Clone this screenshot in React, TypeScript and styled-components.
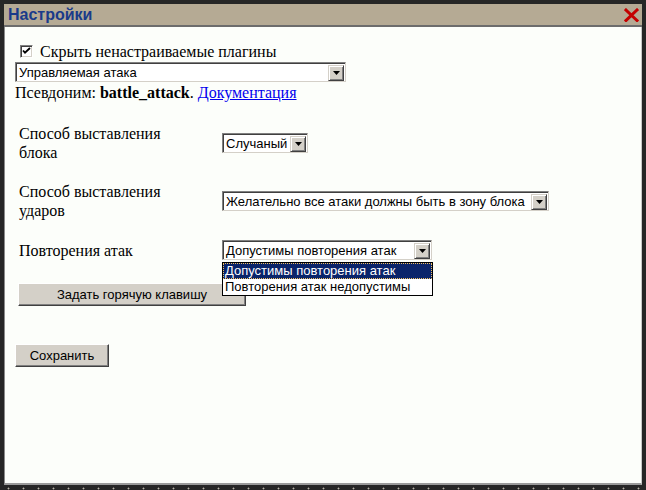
import React from 'react';
import styled, { createGlobalStyle } from 'styled-components';

const Global = createGlobalStyle`
  html, body { margin: 0; padding: 0; background: #262626; }
  body { width: 646px; height: 490px; overflow: hidden; }
`;

const Frame = styled.div`
  box-sizing: border-box;
  width: 646px;
  height: 490px;
  padding: 4px 4px 5px 4px;
  background-color: #262626;
  background-image: radial-gradient(circle, #b8b4a8 0.7px, transparent 1.2px);
  background-size: 15px 15px;
  background-position: 1px 1px;
  display: flex;
  flex-direction: column;
`;

const TitleBar = styled.div`
  height: 21px;
  flex: none;
  background: #b5aa94;
  border-bottom: 2px solid #6c6c6c;
  display: flex;
  align-items: center;
  justify-content: space-between;
  padding: 0 3px 0 4px;
`;

const Title = styled.span`
  font: bold 16px "Liberation Sans", Arial, sans-serif;
  color: #1a3a8a;
`;

const Content = styled.div`
  flex: 1;
  background: #fcfefa;
  border-left: 1px solid #8a8a8a;
  border-right: 1px solid #c8c8c8;
  border-bottom: 2px solid #9a9a9a;
  padding: 15px 10px 0 10px;
  font: 16px "Liberation Serif", "Times New Roman", serif;
  color: #000;
  display: flex;
  flex-direction: column;
  align-items: flex-start;
`;

const CheckRow = styled.label`
  display: flex;
  align-items: center;
  gap: 7px;
  padding-left: 5px;
  line-height: 19px;
  margin-bottom: 1px;
`;

const CheckBox = styled.span`
  box-sizing: border-box;
  width: 13px;
  height: 13px;
  background: #fff;
  border-top: 1px solid #808080;
  border-left: 1px solid #808080;
  border-right: 1px solid #fff;
  border-bottom: 1px solid #fff;
  box-shadow: inset 1px 1px 0 #404040, inset -1px -1px 0 #d4d0c8;
  display: flex;
  align-items: center;
  justify-content: center;
`;

const SelectBox = styled.div<{ $w: number }>`
  box-sizing: border-box;
  width: ${(p) => p.$w}px;
  height: 20px;
  background: #fff;
  border-top: 1px solid #808080;
  border-left: 1px solid #808080;
  border-right: 1px solid #d4d0c8;
  border-bottom: 1px solid #d4d0c8;
  box-shadow: inset 1px 1px 0 #404040;
  display: flex;
  align-items: center;
  padding: 1px 1px 0 2px;
  font: 13px "Liberation Sans", Arial, sans-serif;
  color: #000;
`;

const SelectText = styled.span`
  flex: 1;
  white-space: nowrap;
  overflow: hidden;
  padding-left: 1px;
`;

const ArrowBtn = styled.span`
  box-sizing: border-box;
  width: 16px;
  height: 16px;
  background: #d4d0c8;
  border-top: 1px solid #d4d0c8;
  border-left: 1px solid #d4d0c8;
  border-right: 1px solid #404040;
  border-bottom: 1px solid #404040;
  box-shadow: inset 1px 1px 0 #fff, inset -1px -1px 0 #808080;
  display: flex;
  align-items: center;
  justify-content: center;
`;

const Line = styled.div`
  margin-top: 2px;
  line-height: 18px;
`;

const DocLink = styled.a`
  color: #0000ee;
  text-decoration: underline;
`;

const Grid = styled.div`
  margin-top: 22px;
  padding-left: 4px;
  display: grid;
  grid-template-columns: 160px auto;
  column-gap: 43px;
  row-gap: 20px;
  align-items: center;
`;

const Label = styled.div`
  line-height: 19px;
`;

const SelectWrap = styled.div`
  position: relative;
`;

const DropList = styled.div`
  position: absolute;
  left: 0;
  top: 22px;
  width: 211px;
  box-sizing: border-box;
  border: 1px solid #000;
  background: #fff;
  font: 13px "Liberation Sans", Arial, sans-serif;
  z-index: 2;
`;

const DropItem = styled.div<{ $sel?: boolean }>`
  height: 16px;
  line-height: 16px;
  padding-left: 2px;
  white-space: nowrap;
  background: ${(p) => (p.$sel ? '#0a246a' : '#fff')};
  color: ${(p) => (p.$sel ? '#fff' : '#000')};
  outline: ${(p) => (p.$sel ? '1px dotted #f0c060' : 'none')};
  outline-offset: -1px;
`;

const Button = styled.button<{ $w: number }>`
  box-sizing: border-box;
  width: ${(p) => p.$w}px;
  height: 23px;
  background: #d4d0c8;
  border-top: 1px solid #fff;
  border-left: 1px solid #fff;
  border-right: 1px solid #404040;
  border-bottom: 1px solid #404040;
  box-shadow: inset -1px -1px 0 #808080;
  font: 13px "Liberation Sans", Arial, sans-serif;
  color: #000;
  padding: 0;
  cursor: default;
`;

const HotkeyButton = styled(Button)`
  margin-top: 23px;
  margin-left: 3px;
`;

const SaveButton = styled(Button)`
  margin-top: 38px;
`;

const Arrow = () => (
  <ArrowBtn>
    <svg width="7" height="4" viewBox="0 0 7 4">
      <path d="M0 0h7L3.5 4z" fill="#000" />
    </svg>
  </ArrowBtn>
);

const Select = ({ w, text }: { w: number; text: string }) => (
  <SelectBox $w={w}>
    <SelectText>{text}</SelectText>
    <Arrow />
  </SelectBox>
);

export default function App() {
  return (
    <>
      <Global />
      <Frame>
        <TitleBar>
          <Title>Настройки</Title>
          <svg width="15" height="14" viewBox="0 0 15 14">
            <path d="M2 2L13 12.5M13 2L2 12.5" stroke="#c40000" strokeWidth="3" strokeLinecap="square" />
          </svg>
        </TitleBar>
        <Content>
          <CheckRow>
            <CheckBox>
              <svg width="9" height="9" viewBox="0 0 9 9">
                <path d="M1 3.5l2 2.2L8 1" stroke="#000" strokeWidth="1.8" fill="none" />
              </svg>
            </CheckBox>
            Скрыть ненастраиваемые плагины
          </CheckRow>
          <Select w={331} text="Управляемая атака" />
          <Line>
            Псевдоним: <b>battle_attack</b>. <DocLink href="#">Документация</DocLink>
          </Line>
          <Grid>
            <Label>Способ выставления блока</Label>
            <div>
              <Select w={86} text="Случаный" />
            </div>
            <Label>Способ выставления ударов</Label>
            <div>
              <Select w={327} text="Желательно все атаки должны быть в зону блока" />
            </div>
            <Label>Повторения атак</Label>
            <SelectWrap>
              <Select w={210} text="Допустимы повторения атак" />
              <DropList>
                <DropItem $sel>Допустимы повторения атак</DropItem>
                <DropItem>Повторения атак недопустимы</DropItem>
              </DropList>
            </SelectWrap>
          </Grid>
          <HotkeyButton $w={228}>Задать горячую клавишу</HotkeyButton>
          <SaveButton $w={94}>Сохранить</SaveButton>
        </Content>
      </Frame>
    </>
  );
}
